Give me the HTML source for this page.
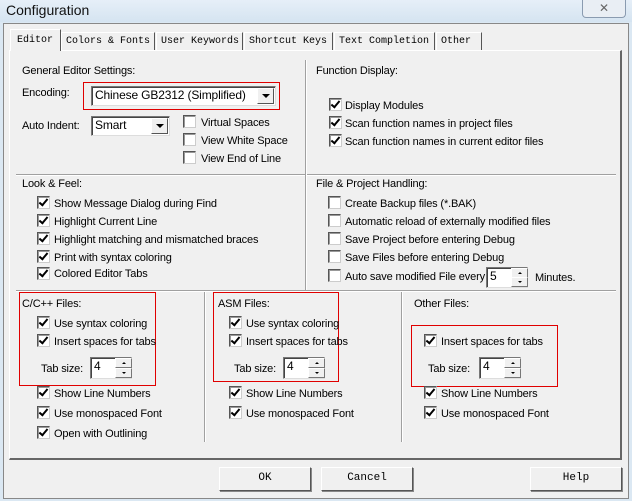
<!DOCTYPE html>
<html><head><style>
*{margin:0;padding:0;box-sizing:border-box}
body{width:632px;height:501px;overflow:hidden;background:#dbe8f3;font-family:"Liberation Sans",sans-serif;font-size:11px;letter-spacing:-0.15px;color:#000;position:relative}
.a{position:absolute;white-space:nowrap}
.t{line-height:16px}
.cb{position:absolute;width:13px;height:13px;background:#fff;border:1px solid #555;border-right-color:#ccc;border-bottom-color:#ccc;box-shadow:inset 1px 1px 0 #999}
.cb.on::after{content:"";position:absolute;left:3px;top:0px;width:3px;height:7px;border:solid #000;border-width:0 2px 2px 0;transform:rotate(40deg)}
.hl{position:absolute;height:2px;border-top:1px solid #a0a0a0;border-bottom:1px solid #fff}
.vl{position:absolute;width:2px;border-left:1px solid #a0a0a0;border-right:1px solid #fff}
.red{position:absolute;border:1px solid #e00000}
.edit{position:absolute;background:#fff;border:1px solid #777;border-right-color:#ddd;border-bottom-color:#ddd;box-shadow:inset 1px 1px 0 #444;padding:1px 0 0 3px;line-height:15px;font-size:12px}
.arr{position:absolute;background:#f0f0f0;border:1px solid #fff;border-right-color:#555;border-bottom-color:#555}
.arr::after{content:"";position:absolute;left:50%;top:50%;margin:-2px 0 0 -4px;border:4px solid transparent;border-top:4px solid #000;border-bottom:0}
.sp{position:absolute;background:#f0f0f0;border:1px solid #fff;border-right-color:#777;border-bottom-color:#777;width:17px;height:10px}
.sp::after{content:"";position:absolute;left:6px;top:3px;border:2px solid transparent;border-bottom:2px solid #000;border-top:0}
.sp.d::after{border-bottom:0;border-top:2px solid #000}
.btn{position:absolute;background:#f0f0f0;border:1px solid #fff;border-right-color:#555;border-bottom-color:#555;box-shadow:1px 1px 0 #888;font-family:"Liberation Mono",monospace;font-size:11px;letter-spacing:0;text-align:center;line-height:21px}
.tab{position:absolute;top:32px;height:18px;border:1px solid #fff;border-right-color:#555;border-bottom:none;font-family:"Liberation Mono",monospace;font-size:10px;letter-spacing:0;line-height:17px;padding-left:4px;white-space:nowrap;overflow:hidden}
</style></head><body>
<div class="a" style="left:0;top:0;width:632px;height:22px;background:linear-gradient(#e6eff8,#d5e4f1)"></div>
<div class="a" style="left:6px;top:2px;font-size:14px;letter-spacing:0;color:#111">Configuration</div>
<div class="a" style="left:582px;top:0;width:44px;height:18px;border:1px solid #8a9bb0;border-top:none;border-radius:0 0 4px 4px;background:#e9eef4;text-align:center;color:#666;font-size:12px;line-height:16px">✕</div>
<div class="a" style="left:3px;top:23px;width:626px;height:476px;background:#f0f0f0;border:1px solid #888"></div>
<div class="a" style="left:9px;top:50px;width:613px;height:410px;border:1px solid #fff;border-right:2px solid #666;border-bottom:2px solid #666"></div>
<div class="tab" style="left:10px;top:29px;height:22px;width:51px;background:#f0f0f0;line-height:21px;padding-left:6px;z-index:2">Editor</div>
<div class="tab" style="left:61px;width:94px">Colors &amp; Fonts</div>
<div class="tab" style="left:156px;width:87px">User Keywords</div>
<div class="tab" style="left:244px;width:89px">Shortcut Keys</div>
<div class="tab" style="left:334px;width:101px">Text Completion</div>
<div class="tab" style="left:436px;width:46px">Other</div>

<div class="hl" style="left:16px;top:174px;width:600px"></div>
<div class="hl" style="left:16px;top:290px;width:600px"></div>
<div class="vl" style="left:305px;top:60px;height:230px"></div>
<div class="vl" style="left:204px;top:292px;height:150px"></div>
<div class="vl" style="left:401px;top:292px;height:150px"></div>

<div class="a t" style="left:22px;top:63px">General Editor Settings:</div>
<div class="a t" style="left:22px;top:85px">Encoding:</div>
<div class="red" style="left:83px;top:82px;width:197px;height:28px"></div>
<div class="edit" style="left:91px;top:86px;width:185px;height:20px">Chinese GB2312 (Simplified)</div>
<div class="arr" style="left:257px;top:88px;width:17px;height:16px"></div>
<div class="a t" style="left:22px;top:118px">Auto Indent:</div>
<div class="edit" style="left:91px;top:116px;width:79px;height:20px">Smart</div>
<div class="arr" style="left:151px;top:118px;width:17px;height:16px"></div>
<div class="cb" style="left:183px;top:115px"></div><div class="a t" style="left:201px;top:115px">Virtual Spaces</div>
<div class="cb" style="left:183px;top:133px"></div><div class="a t" style="left:201px;top:133px">View White Space</div>
<div class="cb" style="left:183px;top:151px"></div><div class="a t" style="left:201px;top:151px">View End of Line</div>

<div class="a t" style="left:316px;top:63px">Function Display:</div>
<div class="cb on" style="left:329px;top:98px"></div><div class="a t" style="left:345px;top:98px">Display Modules</div>
<div class="cb on" style="left:329px;top:116px"></div><div class="a t" style="left:345px;top:116px">Scan function names in project files</div>
<div class="cb on" style="left:329px;top:134px"></div><div class="a t" style="left:345px;top:134px">Scan function names in current editor files</div>

<div class="a t" style="left:22px;top:176px">Look &amp; Feel:</div>
<div class="cb on" style="left:37px;top:196px"></div><div class="a t" style="left:54px;top:196px">Show Message Dialog during Find</div>
<div class="cb on" style="left:37px;top:214px"></div><div class="a t" style="left:54px;top:214px">Highlight Current Line</div>
<div class="cb on" style="left:37px;top:232px"></div><div class="a t" style="left:54px;top:232px">Highlight matching and mismatched braces</div>
<div class="cb on" style="left:37px;top:250px"></div><div class="a t" style="left:54px;top:250px">Print with syntax coloring</div>
<div class="cb on" style="left:37px;top:267px"></div><div class="a t" style="left:54px;top:266px">Colored Editor Tabs</div>

<div class="a t" style="left:316px;top:176px">File &amp; Project Handling:</div>
<div class="cb" style="left:328px;top:196px"></div><div class="a t" style="left:345px;top:196px">Create Backup files (*.BAK)</div>
<div class="cb" style="left:328px;top:214px"></div><div class="a t" style="left:345px;top:214px">Automatic reload of externally modified files</div>
<div class="cb" style="left:328px;top:232px"></div><div class="a t" style="left:345px;top:232px">Save Project before entering Debug</div>
<div class="cb" style="left:328px;top:250px"></div><div class="a t" style="left:345px;top:250px">Save Files before entering Debug</div>
<div class="cb" style="left:328px;top:269px"></div><div class="a t" style="left:345px;top:269px">Auto save modified File every</div>
<div class="edit" style="left:486px;top:267px;width:42px;height:21px">5</div>
<div class="sp" style="left:511px;top:268px"></div><div class="sp d" style="left:511px;top:277px"></div>
<div class="a t" style="left:535px;top:270px">Minutes.</div>

<div class="a t" style="left:22px;top:296px">C/C++ Files:</div>
<div class="red" style="left:19px;top:292px;width:137px;height:94px"></div>
<div class="cb on" style="left:37px;top:316px"></div><div class="a t" style="left:54px;top:316px">Use syntax coloring</div>
<div class="cb on" style="left:37px;top:334px"></div><div class="a t" style="left:54px;top:334px">Insert spaces for tabs</div>
<div class="a t" style="left:41px;top:361px">Tab size:</div>
<div class="edit" style="left:90px;top:357px;width:42px;height:22px">4</div>
<div class="sp" style="left:115px;top:358px"></div><div class="sp d" style="left:115px;top:368px"></div>
<div class="cb on" style="left:37px;top:386px"></div><div class="a t" style="left:54px;top:386px">Show Line Numbers</div>
<div class="cb on" style="left:37px;top:406px"></div><div class="a t" style="left:54px;top:406px">Use monospaced Font</div>
<div class="cb on" style="left:37px;top:426px"></div><div class="a t" style="left:54px;top:426px">Open with Outlining</div>

<div class="a t" style="left:218px;top:296px">ASM Files:</div>
<div class="red" style="left:213px;top:292px;width:126px;height:90px"></div>
<div class="cb on" style="left:229px;top:316px"></div><div class="a t" style="left:246px;top:316px">Use syntax coloring</div>
<div class="cb on" style="left:229px;top:334px"></div><div class="a t" style="left:246px;top:334px">Insert spaces for tabs</div>
<div class="a t" style="left:234px;top:361px">Tab size:</div>
<div class="edit" style="left:283px;top:357px;width:42px;height:22px">4</div>
<div class="sp" style="left:308px;top:358px"></div><div class="sp d" style="left:308px;top:368px"></div>
<div class="cb on" style="left:229px;top:386px"></div><div class="a t" style="left:246px;top:386px">Show Line Numbers</div>
<div class="cb on" style="left:229px;top:406px"></div><div class="a t" style="left:246px;top:406px">Use monospaced Font</div>

<div class="a t" style="left:414px;top:296px">Other Files:</div>
<div class="red" style="left:411px;top:325px;width:147px;height:62px"></div>
<div class="cb on" style="left:424px;top:334px"></div><div class="a t" style="left:441px;top:334px">Insert spaces for tabs</div>
<div class="a t" style="left:428px;top:361px">Tab size:</div>
<div class="edit" style="left:479px;top:357px;width:42px;height:22px">4</div>
<div class="sp" style="left:504px;top:358px"></div><div class="sp d" style="left:504px;top:368px"></div>
<div class="cb on" style="left:424px;top:386px"></div><div class="a t" style="left:441px;top:386px">Show Line Numbers</div>
<div class="cb on" style="left:424px;top:406px"></div><div class="a t" style="left:441px;top:406px">Use monospaced Font</div>

<div class="btn" style="left:219px;top:467px;width:92px;height:24px">OK</div>
<div class="btn" style="left:321px;top:467px;width:92px;height:24px">Cancel</div>
<div class="btn" style="left:530px;top:467px;width:92px;height:24px">Help</div>
</body></html>
